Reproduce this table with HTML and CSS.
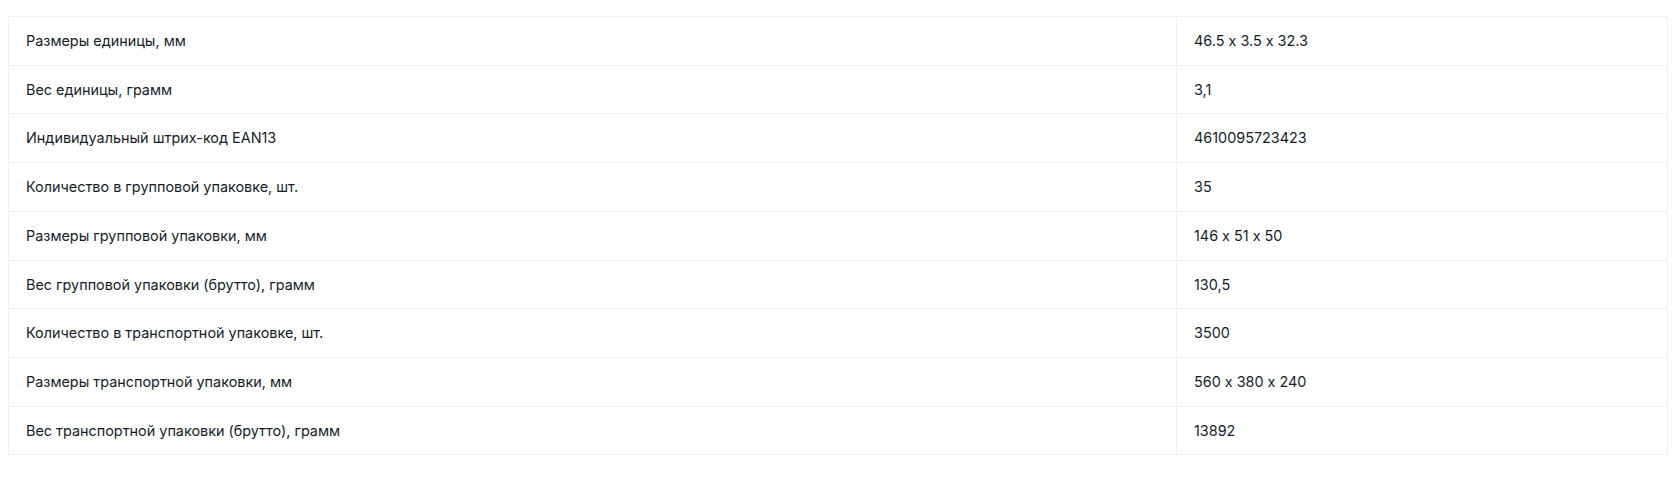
FILE: index.html
```html
<!DOCTYPE html>
<html lang="ru">
<head>
  <meta charset="UTF-8" />
  <title>Характеристики</title>
  <link rel="stylesheet" href="styles.css">
</head>
<body>
  <div class="specs">
    <table class="specs-table">
      <tr><td class="name">Размеры единицы, мм</td><td class="value">46.5 x 3.5 x 32.3</td></tr>
      <tr><td class="name">Вес единицы, грамм</td><td class="value">3,1</td></tr>
      <tr><td class="name">Индивидуальный штрих-код EAN13</td><td class="value">4610095723423</td></tr>
      <tr><td class="name">Количество в групповой упаковке, шт.</td><td class="value">35</td></tr>
      <tr><td class="name">Размеры групповой упаковки, мм</td><td class="value">146 x 51 x 50</td></tr>
      <tr><td class="name">Вес групповой упаковки (брутто), грамм</td><td class="value">130,5</td></tr>
      <tr><td class="name">Количество в транспортной упаковке, шт.</td><td class="value">3500</td></tr>
      <tr><td class="name">Размеры транспортной упаковки, мм</td><td class="value">560 x 380 x 240</td></tr>
      <tr><td class="name">Вес транспортной упаковки (брутто), грамм</td><td class="value">13892</td></tr>
    </table>
  </div>
</body>
</html>
```

FILE: styles.css
```css
body { margin: 0; background: #fff; font-family: Inter, "Noto Sans", sans-serif; color: #161d27; }
.specs { padding: 16px 12px 0 8px; }
.specs-table {
  width: 100%;
  border-collapse: collapse;
  border: 1px solid #f0f0f0;
  font-size: 14.4px;
  font-feature-settings: "calt" 0;
}
.specs-table td {
  border: 1px solid #f0f0f0;
  padding: 14px 17px;
  line-height: 19.7px;
  text-align: left;
  vertical-align: middle;
}
.specs-table .name { width: 1133px; }
```
